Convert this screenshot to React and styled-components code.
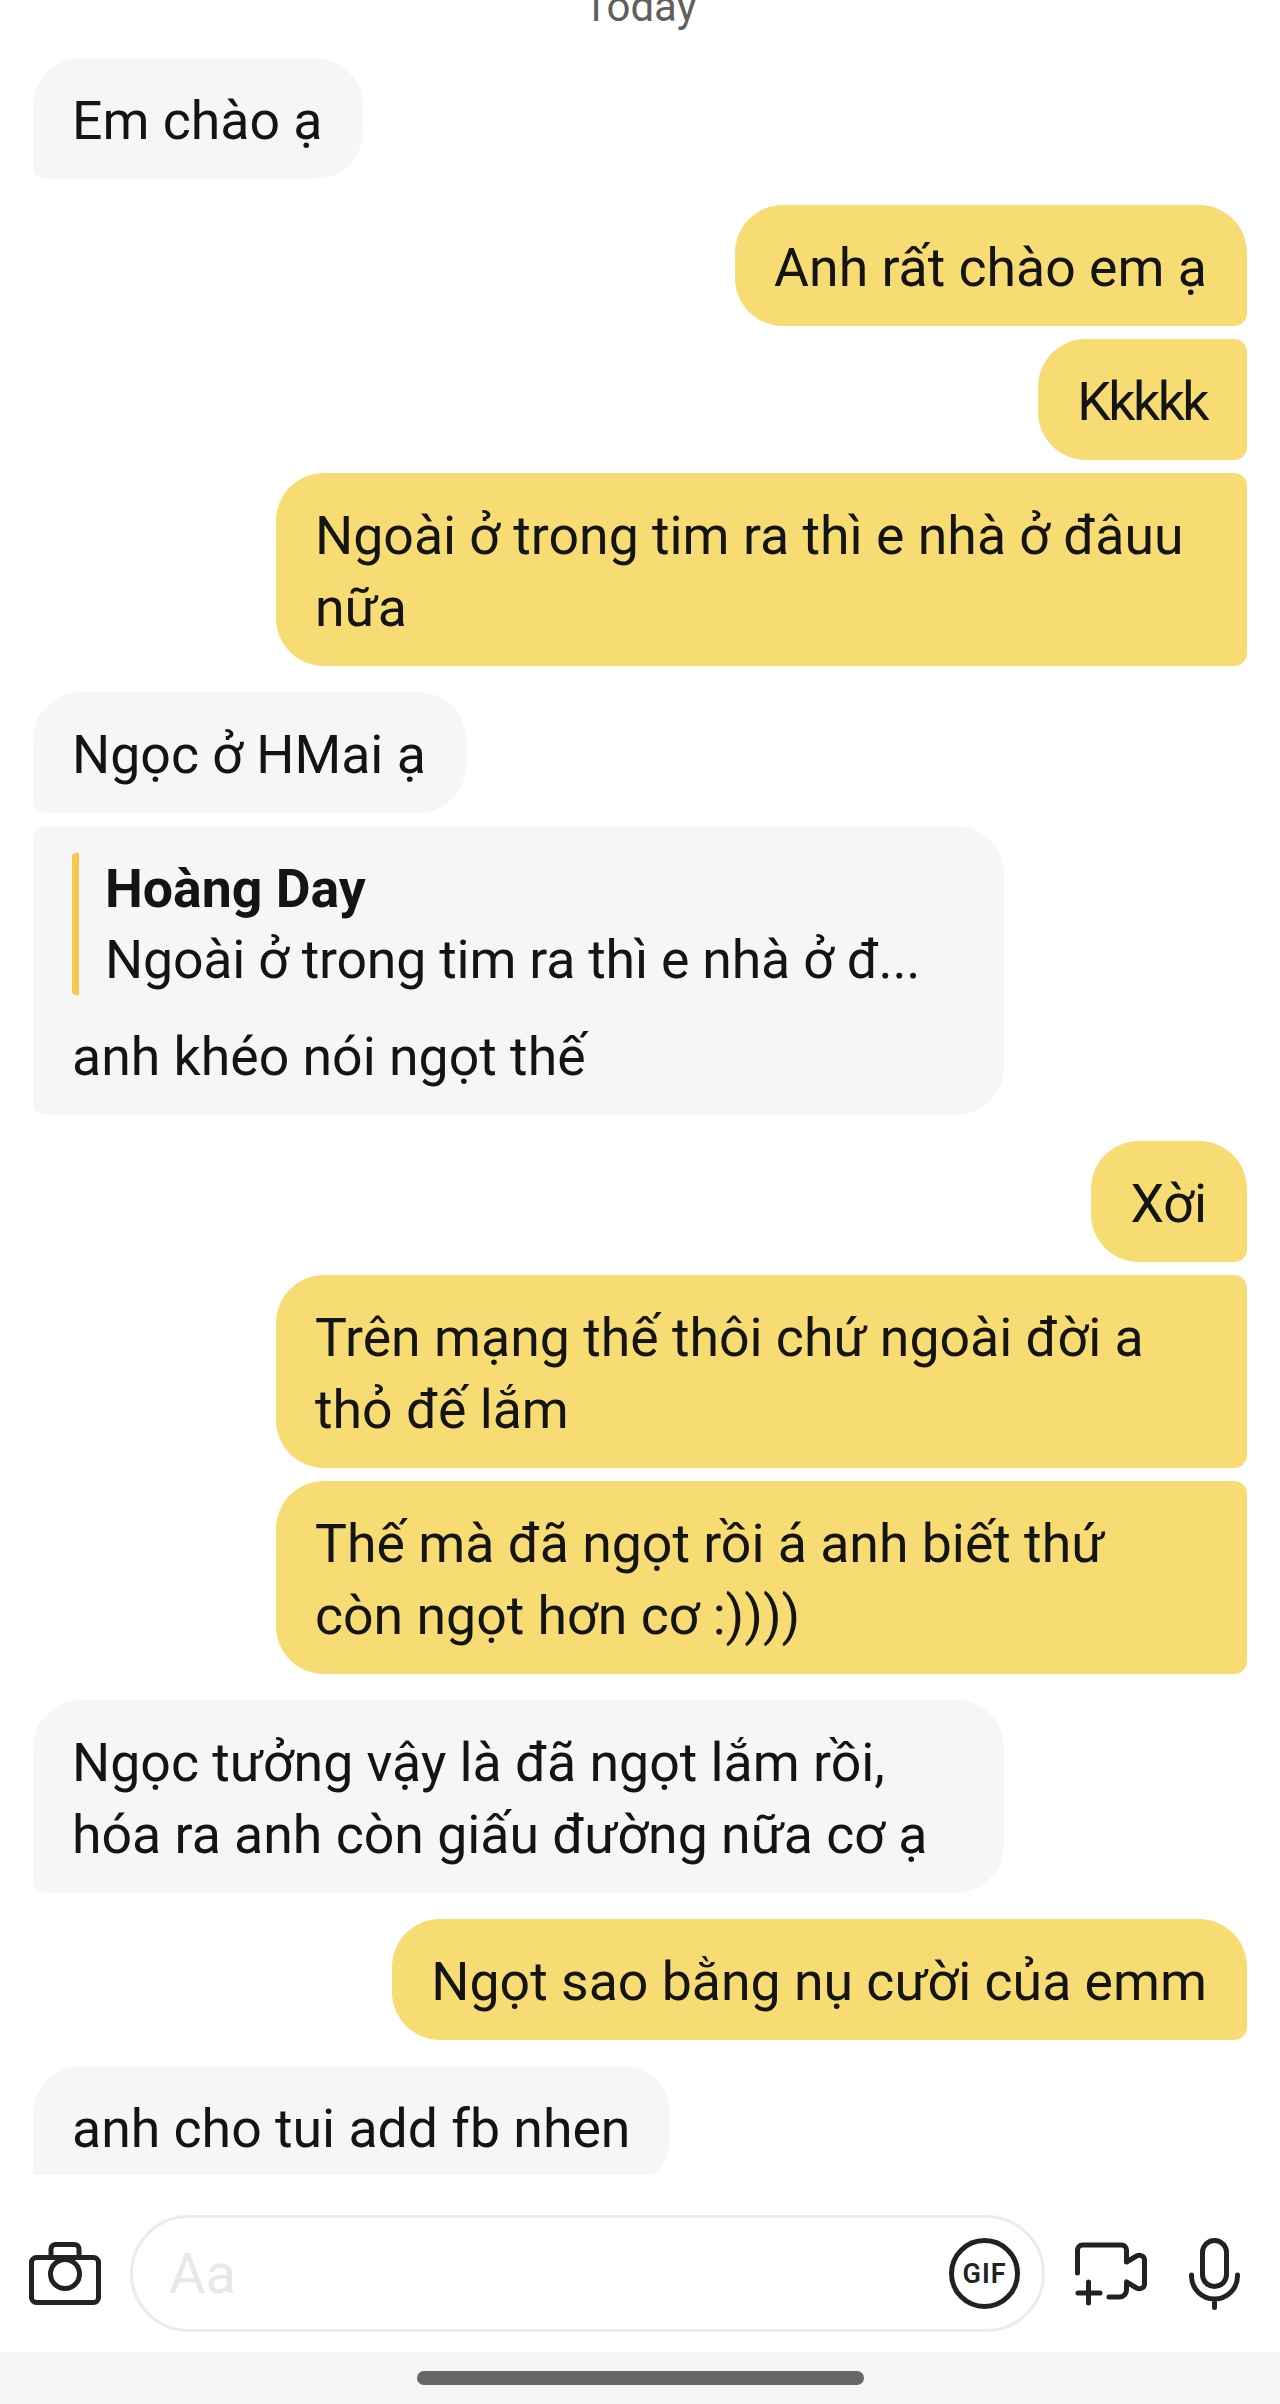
import React from "react";
import styled, { createGlobalStyle } from "styled-components";

const GlobalStyle = createGlobalStyle`
  html, body { margin: 0; padding: 0; background: #fff; }
  body { font-family: Roboto, "Noto Sans", sans-serif; color: #141414; }
`;

const Page = styled.div`
  width: 1280px;
  height: 2404px;
  display: flex;
  flex-direction: column;
  overflow: hidden;
`;

const Thread = styled.div`
  height: 2175px;
  flex: none;
  overflow: hidden;
  padding: 0 33px;
  box-sizing: border-box;
  display: flex;
  flex-direction: column;
`;

const DayLabel = styled.div`
  margin-top: -18px;
  height: 50px;
  flex: none;
  line-height: 50px;
  text-align: center;
  font-size: 42px;
  color: #5f5f5f;
`;

const Bubble = styled.div`
  flex: none;
  box-sizing: border-box;
  width: ${(p) => (p.$wide ? "971px" : "fit-content")};
  max-width: 971px;
  margin-top: ${(p) => (p.$grouped ? 13 : 26)}px;
  padding: 27px 40px 22px 39px;
  font-size: 53.6px;
  line-height: 72px;
  letter-spacing: ${(p) => (p.$tight ? "-2.5px" : "normal")};
  white-space: pre-line;
  align-self: ${(p) => (p.$mine ? "flex-end" : "flex-start")};
  background: ${(p) => (p.$mine ? "#f7db73" : "#f6f6f6")};
  border-radius: ${(p) =>
    p.$mine
      ? `48px ${p.$grouped ? 13 : 48}px 13px 48px`
      : `${p.$grouped ? 13 : 48}px 48px 48px 13px`};
`;

const Quote = styled.div`
  border-left: 7px solid #f5c84c;
  border-radius: 4px;
  padding-left: 26px;
  margin-bottom: 26px;
  height: 142px;
  line-height: 71px;
  white-space: nowrap;
`;

const QuoteName = styled.div`
  font-weight: 700;
`;

const QuoteText = styled.div`
  letter-spacing: -0.2px;
`;

const InputBar = styled.div`
  height: 177px;
  box-sizing: border-box;
  padding: 20px 0 0 29px;
  flex: none;
  display: flex;
  align-items: center;
  background: #fff;
`;

const Field = styled.div`
  width: 915px;
  height: 117px;
  box-sizing: border-box;
  margin: 0 30px 0 29px;
  border: 3px solid #ebebeb;
  border-radius: 59px;
  padding: 0 22px 0 36px;
  display: flex;
  align-items: center;
  justify-content: space-between;
`;

const Placeholder = styled.span`
  font-size: 56px;
  color: #e8e8e8;
`;

const GifBadge = styled.div`
  width: 71px;
  height: 71px;
  box-sizing: border-box;
  border: 5px solid #222;
  border-radius: 50%;
  display: flex;
  align-items: center;
  justify-content: center;
  font-size: 27px;
  font-weight: 600;
  letter-spacing: 1px;
  color: #222;
`;

const IconSvg = styled.svg`
  flex: none;
  display: block;
  fill: none;
  stroke: #222;
  stroke-width: 5;
  stroke-linecap: round;
  stroke-linejoin: round;
  margin-right: ${(p) => p.$gap || 0}px;
`;

const HomeBar = styled.div`
  flex: 1;
  background: #f5f5f5;
  display: flex;
  justify-content: center;
  padding-top: 19px;
`;

const HomePill = styled.div`
  width: 447px;
  height: 14px;
  border-radius: 7px;
  background: #666;
`;

const CameraIcon = () => (
  <IconSvg width="72" height="63" viewBox="0 0 72 63">
    <rect x="2.5" y="15.5" width="67" height="45" rx="5" />
    <path d="M22 15V7a4.5 4.5 0 0 1 4.5-4.5h19A4.5 4.5 0 0 1 50 7v8" />
    <circle cx="36" cy="32" r="14.5" fill="#fff" />
  </IconSvg>
);

const VideoIcon = () => (
  <IconSvg $gap={42} width="72" height="64" viewBox="0 0 72 64">
    <path d="M2.5 31V8a5 5 0 0 1 5-5h39a5 5 0 0 1 5 5v12l10-6c3-1.500 8-.5 8 4v24c0 4.500-5 5.500-8 4l-10-6v8a7 7 0 0 1-7 7H34" />
    <path d="M13.500 40v21M3 51h22" />
  </IconSvg>
);

const MicIcon = () => (
  <IconSvg width="51" height="72" viewBox="0 0 51 72">
    <rect x="13.500" y="2.500" width="24" height="46" rx="12" />
    <path d="M2.500 37v1a23 23 0 0 0 46 0v-1M25.500 61v8.500" />
  </IconSvg>
);

const messages = [
  { text: "Em chào ạ" },
  { mine: true, text: "Anh rất chào em ạ" },
  { mine: true, grouped: true, tight: true, text: "Kkkkk" },
  { mine: true, grouped: true, wide: true, text: "Ngoài ở trong tim ra thì e nhà ở đâuu\nnữa" },
  { text: "Ngọc ở HMai ạ" },
  {
    grouped: true,
    wide: true,
    text: "anh khéo nói ngọt thế",
    quote: { name: "Hoàng Day", text: "Ngoài ở trong tim ra thì e nhà ở đ..." },
  },
  { mine: true, text: "Xời" },
  { mine: true, grouped: true, wide: true, text: "Trên mạng thế thôi chứ ngoài đời a\nthỏ đế lắm" },
  { mine: true, grouped: true, wide: true, text: "Thế mà đã ngọt rồi á anh biết thứ\ncòn ngọt hơn cơ :))))" },
  { wide: true, text: "Ngọc tưởng vậy là đã ngọt lắm rồi,\nhóa ra anh còn giấu đường nữa cơ ạ" },
  { mine: true, text: "Ngọt sao bằng nụ cười của emm" },
  { text: "anh cho tui add fb nhen" },
];

export default function App() {
  return (
    <Page>
      <GlobalStyle />
      <Thread>
        <DayLabel>Today</DayLabel>
        {messages.map((m, i) => (
          <Bubble key={i} $mine={m.mine} $grouped={m.grouped} $wide={m.wide} $tight={m.tight}>
            {m.quote && (
              <Quote>
                <QuoteName>{m.quote.name}</QuoteName>
                <QuoteText>{m.quote.text}</QuoteText>
              </Quote>
            )}
            {m.text}
          </Bubble>
        ))}
      </Thread>
      <InputBar>
        <CameraIcon />
        <Field>
          <Placeholder>Aa</Placeholder>
          <GifBadge>GIF</GifBadge>
        </Field>
        <VideoIcon />
        <MicIcon />
      </InputBar>
      <HomeBar>
        <HomePill />
      </HomeBar>
    </Page>
  );
}
